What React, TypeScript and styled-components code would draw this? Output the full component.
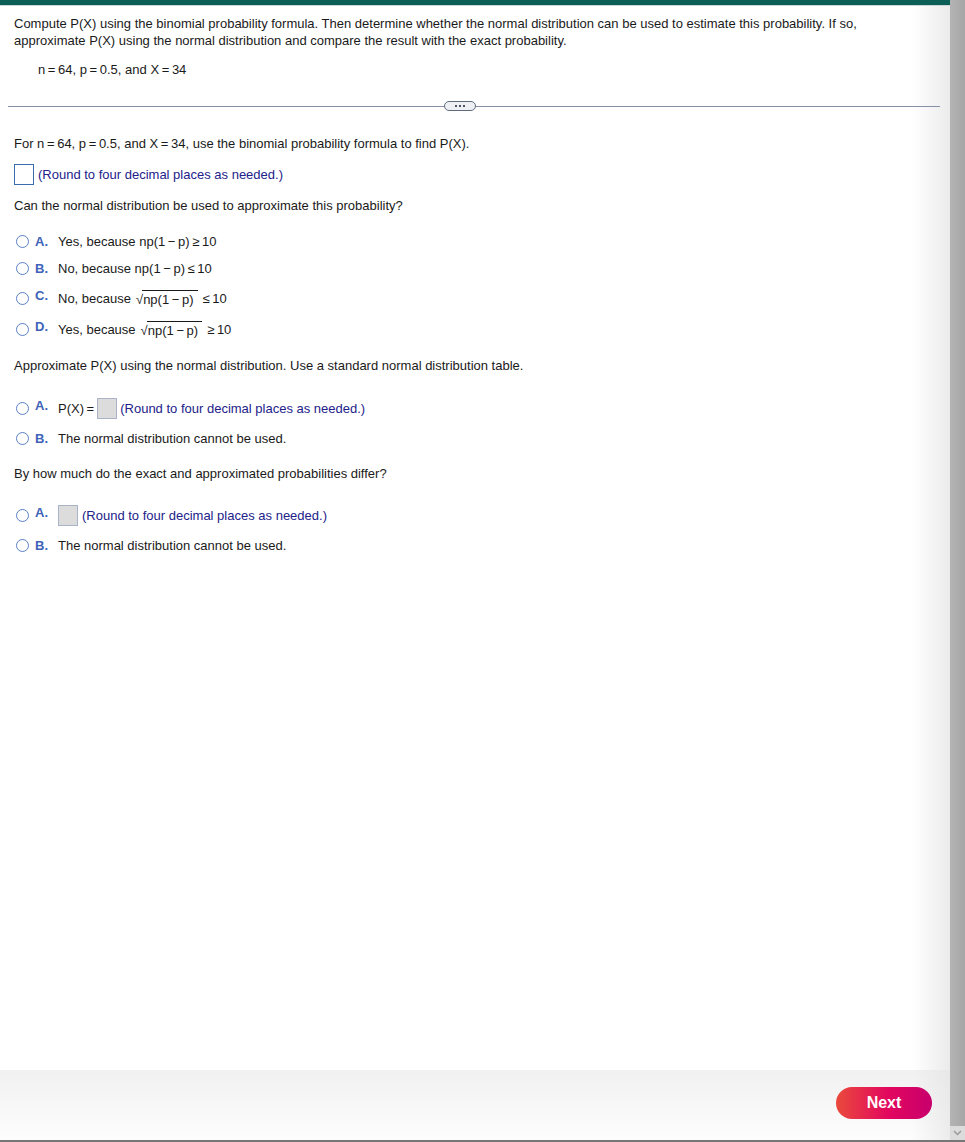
import React from 'react'
import styled, { createGlobalStyle } from 'styled-components'

const Global = createGlobalStyle`
  html, body {
    margin: 0;
    padding: 0;
    background: #fff;
  }
  body {
    font-family: "Liberation Sans", Arial, sans-serif;
    font-size: 13px;
    color: #1a1a1a;
  }
`

const Page = styled.div`
  display: flex;
  width: 965px;
  height: 1142px;
  overflow: hidden;
`

const Main = styled.div`
  flex: 1;
  display: flex;
  flex-direction: column;
  background: linear-gradient(to right, #fff calc(100% - 38px), #ebebeb);
  border-bottom: 2px solid #767676;
`

const TopBar = styled.div`
  height: 5px;
  background: #0b5f57;
  border-bottom: 1px solid #c9d6d4;
`

const Content = styled.div`
  flex: 1;
  padding: 9px 0 0 14px;
`

const Prompt = styled.p`
  margin: 0;
  line-height: 17px;
  padding-right: 70px;
`

const Given = styled.p`
  margin: 12px 0 0 24px;
  line-height: 17px;
`

const Divider = styled.div`
  position: relative;
  height: 1px;
  background: #8690a6;
  margin: 28px 10px 0 -6px;
`

const More = styled.span`
  position: absolute;
  left: 436px;
  top: -5px;
  width: 30px;
  height: 8px;
  border: 1px solid #5f6b7d;
  border-radius: 5px;
  background: #eef0f4;
  display: flex;
  align-items: center;
  justify-content: center;
  gap: 2px;
`

const Dot = styled.i`
  width: 2px;
  height: 2px;
  background: #4c5566;
`

const Question = styled.p<{ $top: number }>`
  margin: ${p => p.$top}px 0 0 0;
  line-height: 17px;
`

const AnswerRow = styled.div`
  display: flex;
  align-items: center;
  margin-top: 12px;
  gap: 4px;
`

const Box = styled.span<{ $filled?: boolean }>`
  display: inline-block;
  width: 18px;
  height: 19px;
  border: 1px solid ${p => (p.$filled ? '#a9b4c8' : '#3d6bb0')};
  background: ${p => (p.$filled ? '#dcdcdc' : '#fff')};
  flex-shrink: 0;
`

const Hint = styled.span`
  color: #22228a;
`

const Options = styled.div<{ $top: number }>`
  display: flex;
  flex-direction: column;
  margin-top: ${p => p.$top}px;
`

const Option = styled.div<{ $h: number }>`
  display: flex;
  align-items: center;
  height: ${p => p.$h}px;
  padding-left: 2px;
`

const Radio = styled.span`
  width: 11px;
  height: 11px;
  border: 1px solid #5a80c8;
  border-radius: 50%;
  flex-shrink: 0;
`

const Letter = styled.span<{ $raised?: boolean }>`
  color: #3e63b8;
  font-weight: bold;
  width: 23px;
  margin-left: 6px;
  padding-bottom: ${p => (p.$raised ? '5px' : '0')};
  flex-shrink: 0;
`

const OptText = styled.span<{ $gap?: number }>`
  display: inline-flex;
  align-items: center;
  gap: ${p => p.$gap ?? 4}px;
  white-space: nowrap;
`

const Rad = styled.span`
  display: inline-flex;
  align-items: flex-end;
  margin: 0 1px;
`

const RadSign = styled.span`
  font-size: 13px;
  margin-right: -1px;
`

const Under = styled.span`
  border-top: 1px solid #1a1a1a;
  padding: 1px 4px 0 1px;
`

const Footer = styled.div`
  height: 70px;
  display: flex;
  align-items: center;
  justify-content: flex-end;
  padding-right: 18px;
  background:
    linear-gradient(to right, rgba(255,255,255,0) calc(100% - 38px), rgba(225,225,225,0.6)),
    linear-gradient(to bottom, #f1f1f1, #fdfdfd);
`

const NextButton = styled.button`
  width: 96px;
  height: 32px;
  border: none;
  border-radius: 16px;
  background: linear-gradient(to right, #ea4a3b, #e2065f 55%, #c8006c);
  color: #fff;
  font-family: "Liberation Sans", Arial, sans-serif;
  font-weight: bold;
  font-size: 16px;
  margin-top: -5px;
`

const Scrollbar = styled.div`
  width: 15px;
  display: flex;
  flex-direction: column;
  background: linear-gradient(to right, #b4b4b4, #a6a6a6);
`

const Track = styled.div`
  flex: 1;
`

const ArrowDown = styled.div`
  height: 14px;
  display: flex;
  align-items: center;
  justify-content: center;
  background: #dcdcdc;
  border-bottom: 2px solid #767676;
`

// thin space, used round "=", "−" and the inequality signs
const t = '\u2009'

const sqrt = (
  <Rad>
    <RadSign>√</RadSign>
    <Under>np(1{t}−{t}p)</Under>
  </Rad>
)

export default function App() {
  return (
    <Page>
      <Global />
      <Main>
        <TopBar />
        <Content>
          <Prompt>
            Compute P(X) using the binomial probability formula. Then determine whether the normal
            distribution can be used to estimate this probability. If so, approximate P(X) using the
            normal distribution and compare the result with the exact probability.
          </Prompt>
          <Given>
            n{t}={t}64, p{t}={t}0.5, and X{t}={t}34
          </Given>
          <Divider>
            <More>
              <Dot />
              <Dot />
              <Dot />
            </More>
          </Divider>

          <Question $top={28}>
            For n{t}={t}64, p{t}={t}0.5, and X{t}={t}34, use the binomial probability formula to find P(X).
          </Question>
          <AnswerRow>
            <Box />
            <Hint>(Round to four decimal places as needed.)</Hint>
          </AnswerRow>
          <Question $top={12}>Can the normal distribution be used to approximate this probability?</Question>

          <Options $top={14}>
            <Option $h={26}>
              <Radio />
              <Letter>A.</Letter>
              <OptText>
                Yes, because np(1{t}−{t}p){t}≥{t}10
              </OptText>
            </Option>
            <Option $h={28}>
              <Radio />
              <Letter>B.</Letter>
              <OptText>
                No, because np(1{t}−{t}p){t}≤{t}10
              </OptText>
            </Option>
            <Option $h={32}>
              <Radio />
              <Letter $raised>C.</Letter>
              <OptText>
                No, because {sqrt}≤{t}10
              </OptText>
            </Option>
            <Option $h={30}>
              <Radio />
              <Letter $raised>D.</Letter>
              <OptText>
                Yes, because {sqrt}≥{t}10
              </OptText>
            </Option>
          </Options>

          <Question $top={13}>
            Approximate P(X) using the normal distribution. Use a standard normal distribution table.
          </Question>
          <Options $top={20}>
            <Option $h={28}>
              <Radio />
              <Letter $raised>A.</Letter>
              <OptText $gap={3}>
                <span>P(X){t}=</span>
                <Box $filled />
                <Hint>(Round to four decimal places as needed.)</Hint>
              </OptText>
            </Option>
            <Option $h={32}>
              <Radio />
              <Letter>B.</Letter>
              <OptText>The normal distribution cannot be used.</OptText>
            </Option>
          </Options>

          <Question $top={11}>By how much do the exact and approximated probabilities differ?</Question>
          <Options $top={19}>
            <Option $h={28}>
              <Radio />
              <Letter $raised>A.</Letter>
              <OptText>
                <Box $filled />
                <Hint>(Round to four decimal places as needed.)</Hint>
              </OptText>
            </Option>
            <Option $h={32}>
              <Radio />
              <Letter>B.</Letter>
              <OptText>The normal distribution cannot be used.</OptText>
            </Option>
          </Options>
        </Content>
        <Footer>
          <NextButton>Next</NextButton>
        </Footer>
      </Main>
      <Scrollbar>
        <Track />
        <ArrowDown>
          <svg width="9" height="6" viewBox="0 0 9 6">
            <path d="M1 1 L4.5 4.5 L8 1" stroke="#9a9a9a" strokeWidth="1.5" fill="none" />
          </svg>
        </ArrowDown>
      </Scrollbar>
    </Page>
  )
}
